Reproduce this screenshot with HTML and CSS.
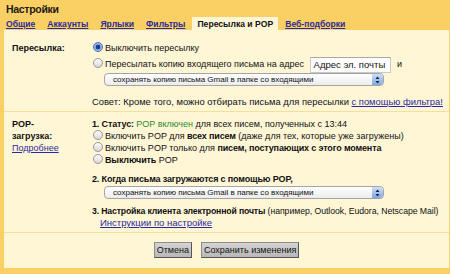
FILE: index.html
```html
<!DOCTYPE html>
<html lang="ru">
<head>
<meta charset="utf-8">
<title>Настройки</title>
<link rel="stylesheet" href="styles.css">
</head>
<body>
<div class="app">
  <div class="title">Настройки</div>
  <div class="tabs">
    <a class="tab" href="#">Общие</a>
    <a class="tab" href="#">Аккаунты</a>
    <a class="tab" href="#">Ярлыки</a>
    <a class="tab" href="#">Фильтры</a>
    <span class="tab active">Пересылка и POP</span>
    <a class="tab" href="#">Веб-подборки</a>
  </div>
  <div class="panel">
    <div class="section fwd">
      <div class="label">Пересылка:</div>
      <div class="content">
        <div class="row"><span class="radio checked"></span>Выключить пересылку</div>
        <div class="row row-input"><span class="radio"></span>Пересылать копию входящего письма на адрес <span class="input">Адрес эл. почты</span> <span class="and">и</span></div>
        <div class="select sel-fwd"><span class="sel-text">сохранять копию письма Gmail в папке со входящими</span><span class="arrows"><svg width="9" height="10" viewBox="0 0 9 10"><path d="M2.5 4 L4.5 1.5 L6.5 4 Z M2.5 6 L4.5 8.5 L6.5 6 Z" fill="#223"/></svg></span></div>
        <div class="tip">Совет: Кроме того, можно отбирать письма для пересылки <a href="#">с помощью фильтра!</a></div>
      </div>
    </div>
    <div class="section pop">
      <div class="label">POP-<br>загрузка:<br><a class="more" href="#">Подробнее</a></div>
      <div class="content">
        <div class="line"><b>1. Статус:</b> <span class="green">POP включен</span> для всех писем, полученных с 13:44</div>
        <div class="row"><span class="radio"></span>Включить POP для <b>всех писем</b> (даже для тех, которые уже загружены)</div>
        <div class="row"><span class="radio"></span>Включить POP только для <b>писем, поступающих с этого момента</b></div>
        <div class="row"><span class="radio"></span><b>Выключить</b> POP</div>
        <div class="line step2"><b>2. Когда письма загружаются с помощью POP,</b></div>
        <div class="select sel-pop"><span class="sel-text">сохранять копию письма Gmail в папке со входящими</span><span class="arrows"><svg width="9" height="10" viewBox="0 0 9 10"><path d="M2.5 4 L4.5 1.5 L6.5 4 Z M2.5 6 L4.5 8.5 L6.5 6 Z" fill="#223"/></svg></span></div>
        <div class="line step3"><b>3. Настройка клиента электронной почты</b> (например, Outlook, Eudora, Netscape Mail)</div>
        <div class="line instr"><a href="#">Инструкции по настройке</a></div>
      </div>
    </div>
    <div class="buttons">
      <span class="btn">Отмена</span>
      <span class="btn">Сохранить изменения</span>
    </div>
  </div>
</div>
</body>
</html>
```
FILE: styles.css
```css
html, body {
  margin: 0;
  padding: 0;
}
body {
  width: 450px;
  height: 274px;
  overflow: hidden;
  background: #fad064;
  font-family: "Liberation Sans", Arial, sans-serif;
  font-size: 9px;
  color: #111;
}
.app {
  display: flex;
  flex-direction: column;
  height: 274px;
}
.title {
  height: 17px;
  line-height: 18px;
  padding-left: 6px;
  font-size: 10.5px;
  font-weight: bold;
  letter-spacing: -0.3px;
  color: #1a1a1a;
}
.tabs {
  height: 13px;
  display: flex;
  padding-left: 1px;
  gap: 2px;
}
.tab {
  padding: 0 5px;
  line-height: 14px;
  font-weight: bold;
  font-size: 8.6px;
  color: #2a2aa0;
  text-decoration: underline;
}
.tab.active {
  background: #fff6d6;
  color: #111;
  text-decoration: none;
  padding: 0 5px;
}
.panel {
  flex: 1;
  margin: 0 1px 6px 4px;
  background: #fff6d6;
  display: flex;
  flex-direction: column;
}
.section {
  display: flex;
  border-bottom: 1px solid #f6df98;
}
.label {
  width: 80px;
  padding-left: 8px;
  font-weight: bold;
  line-height: 12px;
  flex-shrink: 0;
}
.label .more {
  font-weight: normal;
}
a {
  color: #2a2aa0;
  text-decoration: underline;
}
.content {
  flex: 1;
  line-height: 12px;
}
.content b {
  letter-spacing: -0.15px;
}
.fwd {
  padding: 12px 0 3px 0;
}
.row {
  height: 12px;
  line-height: 12px;
  white-space: nowrap;
}
.row-input {
  height: 16px;
  line-height: 16px;
  margin-top: 2px;
}
.radio {
  display: inline-block;
  width: 8px;
  height: 8px;
  border: 1px solid #9a9a9a;
  border-radius: 50%;
  background: linear-gradient(#fdfdfd, #d6d6d6);
  margin: 0 2px 0 1px;
  vertical-align: -1px;
}
.radio.checked {
  border-color: #4a6aa8;
  background: radial-gradient(circle at 50% 50%, #1a3f8a 0 2px, #6f9ee8 2.5px, #a9c8f4 4px);
}
.input {
  display: inline-block;
  width: 76px;
  height: 14px;
  line-height: 14px;
  border: 1px solid #c9c9c9;
  border-top-color: #a8a8a8;
  background: #fff;
  padding-left: 3px;
  margin-left: 3px;
  font-size: 9.5px;
  vertical-align: middle;
}
.and {
  margin-left: 4px;
}
.select {
  display: flex;
  align-items: center;
  margin-left: 12px;
  width: 278px;
  height: 11px;
  border: 1px solid #a5a5a5;
  border-radius: 4px;
  background: linear-gradient(#ffffff, #ececec);
  font-size: 8px;
}
.sel-fwd {
  margin-top: 1px;
}
.sel-text {
  flex: 1;
  padding-left: 8px;
  line-height: 11px;
}
.arrows {
  width: 11px;
  height: 11px;
  border-radius: 0 4px 4px 0;
  background: linear-gradient(#cfe0fa, #7fa8e6);
  display: flex;
  align-items: center;
  justify-content: center;
}
.tip {
  margin-top: 10px;
  white-space: nowrap;
  font-size: 9.4px;
}
.pop {
  padding: 6px 0 4px 0;
}
.green {
  color: #2e8b2e;
}
.line {
  white-space: nowrap;
}
.step2 {
  margin-top: 7px;
}
.sel-pop {
  margin-top: 1px;
}
.step3 {
  margin-top: 6px;
  font-size: 8.7px;
  letter-spacing: -0.05px;
}
.instr {
  padding-left: 8px;
  line-height: 11px;
  font-size: 9.5px;
}
.buttons {
  display: flex;
  justify-content: center;
  gap: 9px;
  padding-top: 9px;
}
.btn {
  height: 14px;
  line-height: 14px;
  padding: 0 2px;
  border: 1px solid #8d8d8d;
  border-right-color: #555;
  border-bottom-color: #555;
  background: linear-gradient(#d4d4d4, #b8b8b8);
  font-size: 9px;
  color: #111;
}
```
